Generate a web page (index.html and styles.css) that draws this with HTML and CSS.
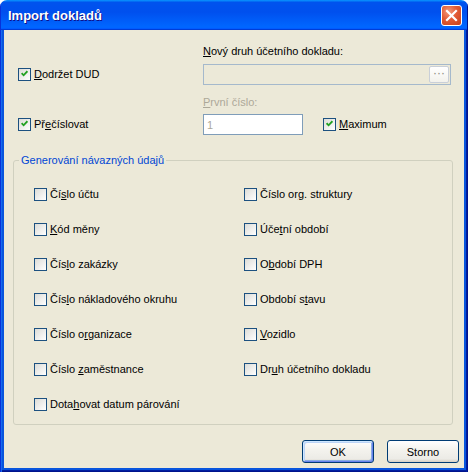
FILE: index.html
```html
<!DOCTYPE html>
<html lang="cs">
<head>
    <meta charset="UTF-8">
    <title>Import dokladů</title>
    <link rel="stylesheet" href="styles.css">
</head>
<body>
    <div class="window">
        <div class="titlebar">
            <span class="title">Import dokladů</span>
            <button class="close" type="button">
                <svg width="13" height="13" viewBox="0 0 13 13"><path d="M2 2 L11 11 M11 2 L2 11" stroke="#fff" stroke-width="2.2" stroke-linecap="square"/></svg>
            </button>
        </div>

        <div class="frame">
            <div class="client">
                <!-- horní část: DUD a přečíslování -->
                <div class="top">
                    <div class="caption cap1"><u>N</u>ový druh účetního dokladu:</div>
                    <label class="check chk1"><span class="box checked"></span><span><u>D</u>održet DUD</span></label>
                    <div class="input disabled in1"><span class="browse">···</span></div>

                    <div class="caption muted cap2"><u>P</u>rvní číslo:</div>
                    <label class="check chk2"><span class="box checked"></span><span>Př<u>e</u>číslovat</span></label>
                    <div class="in2row">
                        <div class="input small"><span class="value">1</span></div>
                        <label class="check"><span class="box checked"></span><span><u>M</u>aximum</span></label>
                    </div>
                </div>

                <fieldset class="group">
                    <legend>Generování návazných údajů</legend>
                    <div class="group-grid">
                        <label class="check"><span class="box"></span><span>Čí<u>s</u>lo účtu</span></label>
                        <label class="check"><span class="box"></span><span>Číslo or<u>g</u>. struktury</span></label>
                        <label class="check"><span class="box"></span><span><u>K</u>ód měny</span></label>
                        <label class="check"><span class="box"></span><span>Úče<u>t</u>ní období</span></label>
                        <label class="check"><span class="box"></span><span>Čís<u>l</u>o zakázky</span></label>
                        <label class="check"><span class="box"></span><span>O<u>b</u>dobí DPH</span></label>
                        <label class="check"><span class="box"></span><span>Čís<u>l</u>o nákladového okruhu</span></label>
                        <label class="check"><span class="box"></span><span>Období s<u>t</u>avu</span></label>
                        <label class="check"><span class="box"></span><span>Číslo o<u>r</u>ganizace</span></label>
                        <label class="check"><span class="box"></span><span><u>V</u>ozidlo</span></label>
                        <label class="check"><span class="box"></span><span>Číslo <u>z</u>aměstnance</span></label>
                        <label class="check"><span class="box"></span><span>Dr<u>u</u>h účetního dokladu</span></label>
                        <label class="check"><span class="box"></span><span>Dota<u>h</u>ovat datum párování</span></label>
                    </div>
                </fieldset>

                <div class="buttons">
                    <button class="btn default" type="button">OK</button>
                    <button class="btn" type="button">Storno</button>
                </div>
            </div>
        </div>
    </div>
</body>
</html>
```

FILE: styles.css
```css
/* základ */
body {
    margin: 0;
    background: #fff;
    font-family: "Liberation Sans", Arial, sans-serif;
    font-size: 11px;
    color: #000;
}

/* okno ve stylu XP */
.window {
    width: 468px;
    height: 472px;
    display: flex;
    flex-direction: column;
    border-radius: 7px 7px 0 0;
    overflow: hidden;
}

.titlebar {
    height: 30px;
    flex: none;
    display: flex;
    align-items: center;
    justify-content: space-between;
    padding: 0 6px 0 8px;
    box-sizing: border-box;
    background: linear-gradient(180deg, #0997ff, #0053ee 8%, #0050ee 40%, #06f 88%, #06f 93%, #005bff 95%, #003dd7 96%, #003dd7);
    box-shadow: inset 1px 0 #0831d9, inset -1px 0 #00138c;
}

.title {
    color: #fff;
    font-weight: bold;
    font-size: 13px;
    text-shadow: 1px 1px #0f1089;
    padding-top: 1px;
}

.close {
    width: 21px;
    height: 21px;
    padding: 0;
    border: 1px solid #fff;
    border-radius: 3px;
    background: radial-gradient(circle at 35% 30%, #f39a7c, #e25b35 45%, #c7401c);
    display: flex;
    align-items: center;
    justify-content: center;
    margin-top: 1px;
}

.frame {
    flex: 1;
    display: flex;
    padding: 0 4px 4px 4px;
    background: #0855dd;
    box-shadow: inset 1px 0 #0831d9, inset 2px 0 #166aee, inset -1px 0 #00138c, inset -2px 0 #001ea0, inset 0 -1px #00138c, inset 0 -2px #001ea0;
}

.client {
    flex: 1;
    background: #ece9d8;
    padding: 14px 11px 0 9px;
    display: flex;
    flex-direction: column;
}

/* horní část */
.top {
    display: grid;
    grid-template-columns: 185px 248px;
    grid-template-rows: 20px 21px 29px 21px;
    padding-left: 5px;
}

.caption {
    line-height: 13px;
    white-space: nowrap;
}

.cap1 { grid-column: 2; grid-row: 1; align-self: start; padding-top: 1px; }
.chk1 { grid-column: 1; grid-row: 2; }
.in1  { grid-column: 2; grid-row: 2; }
.cap2 { grid-column: 2; grid-row: 3; align-self: end; margin-bottom: 5px; }
.chk2 { grid-column: 1; grid-row: 4; }
.in2row {
    grid-column: 2;
    grid-row: 4;
    display: flex;
    align-items: center;
    gap: 20px;
}

.muted { color: #aca899; }

.input {
    height: 21px;
    box-sizing: border-box;
    border: 1px solid #7f9db9;
    background: #fff;
    display: flex;
    align-items: center;
    justify-content: flex-end;
    padding: 1px;
}

.input.disabled {
    background: #ece9d8;
    border-color: #a5b9cc;
}

.input.small {
    width: 100px;
    justify-content: flex-start;
}

.input .value {
    color: #aca899;
    padding-left: 2px;
}

.browse {
    width: 20px;
    height: 17px;
    box-sizing: border-box;
    border: 1px solid #c9cfd8;
    border-radius: 2px;
    background: linear-gradient(#fff, #f3f2ec);
    color: #8c8a80;
    font-size: 12px;
    line-height: 13px;
    text-align: center;
}

/* zaškrtávací pole */
.check {
    display: flex;
    align-items: center;
    gap: 3px;
    line-height: 13px;
    white-space: nowrap;
}

.box {
    width: 13px;
    height: 13px;
    box-sizing: border-box;
    flex: none;
    border: 1px solid #1c5180;
    background: linear-gradient(135deg, #dcdcd7, #fff);
    position: relative;
}

.box.checked::after {
    content: "";
    position: absolute;
    left: 2px;
    top: 1px;
    width: 7px;
    height: 7px;
    background: url("data:image/svg+xml,%3Csvg xmlns='http://www.w3.org/2000/svg' width='7' height='7' viewBox='0 0 7 7'%3E%3Cpath d='M0.6 3.2 L2.6 5.3 L6.4 1.2' fill='none' stroke='%2321a121' stroke-width='1.8'/%3E%3C/svg%3E") no-repeat;
}

/* skupina */
.group {
    margin: 19px 0 0;
    padding: 0;
    border: 1px solid #d0d0bf;
    border-radius: 3px;
    min-width: 0;
}

.group legend {
    margin-left: 5px;
    padding: 0 2px;
    color: #0046d5;
    line-height: 13px;
}

.group-grid {
    display: grid;
    grid-template-columns: 210px auto;
    row-gap: 22px;
    padding: 21px 0 13px 20px;
}

/* tlačítka */
.buttons {
    display: flex;
    justify-content: flex-end;
    gap: 13px;
    margin: 15px -6px 0 0;
}

.btn {
    width: 72px;
    height: 23px;
    border: 1px solid #003c74;
    border-radius: 3px;
    background: linear-gradient(#fff, #f4f3ee 40%, #ecebe6 85%, #d6d0c5);
    font-family: inherit;
    font-size: 11px;
    color: #000;
    padding: 0;
}

.btn.default {
    box-shadow: inset 1px 1px #cee7ff, inset -1px -1px #6982ee, inset 2px 2px #bcd4f6, inset -2px -2px #89ade4;
}
```
